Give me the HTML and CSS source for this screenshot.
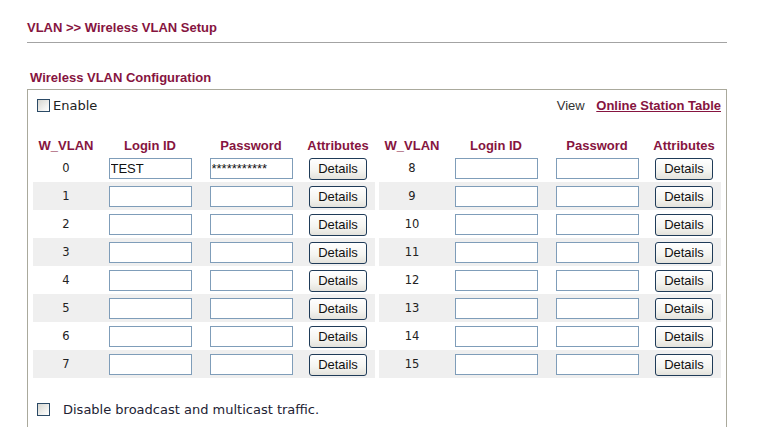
FILE: index.html
```html
<!DOCTYPE html>
<html>
<head>
<meta charset="utf-8">
<link rel="stylesheet" href="styles.css">
</head>
<body>
<div class="page">
  <h1 class="title">VLAN &gt;&gt; Wireless VLAN Setup</h1>
  <h2 class="section">Wireless VLAN Configuration</h2>
  <div class="box">
    <div class="toprow">
      <label class="enable"><span class="cb"></span>Enable</label>
      <div class="view">View <a href="#" class="link">Online Station Table</a></div>
    </div>
    <div class="tables">
      <table class="vt">
        <colgroup><col class="c1"><col class="c2"><col class="c3"><col class="c4"></colgroup>
        <thead><tr><th>W_VLAN</th><th>Login ID</th><th>Password</th><th>Attributes</th></tr></thead>
        <tbody>
          <tr><td class="num">0</td><td><input class="fld" type="text" value="TEST"></td><td><input class="fld" type="text" value="***********"></td><td><button class="btn">Details</button></td></tr>
          <tr><td class="num">1</td><td><input class="fld" type="text"></td><td><input class="fld" type="text"></td><td><button class="btn">Details</button></td></tr>
          <tr><td class="num">2</td><td><input class="fld" type="text"></td><td><input class="fld" type="text"></td><td><button class="btn">Details</button></td></tr>
          <tr><td class="num">3</td><td><input class="fld" type="text"></td><td><input class="fld" type="text"></td><td><button class="btn">Details</button></td></tr>
          <tr><td class="num">4</td><td><input class="fld" type="text"></td><td><input class="fld" type="text"></td><td><button class="btn">Details</button></td></tr>
          <tr><td class="num">5</td><td><input class="fld" type="text"></td><td><input class="fld" type="text"></td><td><button class="btn">Details</button></td></tr>
          <tr><td class="num">6</td><td><input class="fld" type="text"></td><td><input class="fld" type="text"></td><td><button class="btn">Details</button></td></tr>
          <tr><td class="num">7</td><td><input class="fld" type="text"></td><td><input class="fld" type="text"></td><td><button class="btn">Details</button></td></tr>
        </tbody>
      </table>
      <table class="vt">
        <colgroup><col class="c1"><col class="c2"><col class="c3"><col class="c4"></colgroup>
        <thead><tr><th>W_VLAN</th><th>Login ID</th><th>Password</th><th>Attributes</th></tr></thead>
        <tbody>
          <tr><td class="num">8</td><td><input class="fld" type="text"></td><td><input class="fld" type="text"></td><td><button class="btn">Details</button></td></tr>
          <tr><td class="num">9</td><td><input class="fld" type="text"></td><td><input class="fld" type="text"></td><td><button class="btn">Details</button></td></tr>
          <tr><td class="num">10</td><td><input class="fld" type="text"></td><td><input class="fld" type="text"></td><td><button class="btn">Details</button></td></tr>
          <tr><td class="num">11</td><td><input class="fld" type="text"></td><td><input class="fld" type="text"></td><td><button class="btn">Details</button></td></tr>
          <tr><td class="num">12</td><td><input class="fld" type="text"></td><td><input class="fld" type="text"></td><td><button class="btn">Details</button></td></tr>
          <tr><td class="num">13</td><td><input class="fld" type="text"></td><td><input class="fld" type="text"></td><td><button class="btn">Details</button></td></tr>
          <tr><td class="num">14</td><td><input class="fld" type="text"></td><td><input class="fld" type="text"></td><td><button class="btn">Details</button></td></tr>
          <tr><td class="num">15</td><td><input class="fld" type="text"></td><td><input class="fld" type="text"></td><td><button class="btn">Details</button></td></tr>
        </tbody>
      </table>
    </div>
    <label class="bottomrow"><span class="cb"></span><span class="btext">Disable broadcast and multicast traffic.</span></label>
  </div>
</div>
</body>
</html>
```

FILE: styles.css
```css
html, body {
  margin: 0;
  padding: 0;
  background: #ffffff;
}

body {
  font-family: "Liberation Sans", Arial, sans-serif;
  font-size: 13px;
  color: #333333;
  overflow: hidden;
}

.page {
  width: 700px;
  margin-left: 27px;
  padding-top: 20px;
}

.title {
  margin: 0;
  font-size: 13px;
  line-height: 16px;
  font-weight: bold;
  color: #861440;
  padding-bottom: 6px;
  border-bottom: 1px solid #a3a3a3;
  width: 700px;
}

.section {
  margin: 27px 0 0 0;
  padding-left: 3px;
  font-size: 13px;
  line-height: 16px;
  font-weight: bold;
  color: #861440;
}

.box {
  margin-top: 3px;
  border: 1px solid #aaa99c;
  border-bottom: none;
  height: 338px;
  box-sizing: border-box;
  padding-top: 4px;
}

.toprow {
  display: flex;
  justify-content: space-between;
  align-items: center;
  height: 22px;
  padding: 0 5px 0 9px;
}

.enable {
  display: flex;
  align-items: center;
  font-family: "DejaVu Sans", Verdana, sans-serif;
  font-size: 13px;
  color: #222;
}

.cb {
  display: inline-block;
  width: 11px;
  height: 11px;
  border: 1px solid #2b4a66;
  background: linear-gradient(135deg, #d6d6d0 0%, #f4f4f2 70%, #ffffff 100%);
  margin-right: 3px;
}

.view {
  font-size: 13px;
  color: #333;
}

.link {
  margin-left: 8px;
  color: #861440;
  font-weight: bold;
  text-decoration: underline;
}

.tables {
  display: flex;
  gap: 4px;
  padding: 0 4px 0 5px;
  margin-top: 20px;
}

.vt {
  width: 342px;
  table-layout: fixed;
  border-collapse: collapse;
  border-spacing: 0;
}

.c1 { width: 66px; }
.c2 { width: 102px; }
.c3 { width: 100px; }
.c4 { width: 74px; }

.vt th {
  height: 18px;
  padding: 0;
  font-size: 13px;
  font-weight: bold;
  color: #861440;
  text-align: center;
  vertical-align: middle;
}

.vt td {
  height: 28px;
  padding: 0;
  text-align: center;
  vertical-align: middle;
}

.vt tbody tr:nth-child(even) {
  background: #efefef;
}

.num {
  font-family: "DejaVu Sans", Verdana, sans-serif;
  font-size: 11.5px;
  color: #222;
}

.fld {
  display: block;
  margin: 1px auto 0;
  width: 83px;
  height: 21px;
  box-sizing: border-box;
  border: 1px solid #7f9db9;
  background: #fff;
  padding: 0 1px;
  font-family: "Liberation Sans", Arial, sans-serif;
  font-size: 13px;
  color: #111;
  outline: none;
}

.btn {
  display: block;
  margin: 1px auto 0;
  width: 58px;
  height: 22px;
  box-sizing: border-box;
  border: 1px solid #1f3b58;
  border-radius: 3px;
  background: linear-gradient(#ffffff 0%, #f4f4f0 60%, #e3e2dc 100%);
  font-family: "Liberation Sans", Arial, sans-serif;
  font-size: 13px;
  color: #111;
  padding: 0;
}

.bottomrow {
  display: flex;
  align-items: center;
  height: 22px;
  margin-top: 20px;
  padding-left: 9px;
}

.bottomrow .cb {
  margin-right: 13px;
}

.btext {
  font-family: "DejaVu Sans", Verdana, sans-serif;
  font-size: 13px;
  color: #222233;
}
```
